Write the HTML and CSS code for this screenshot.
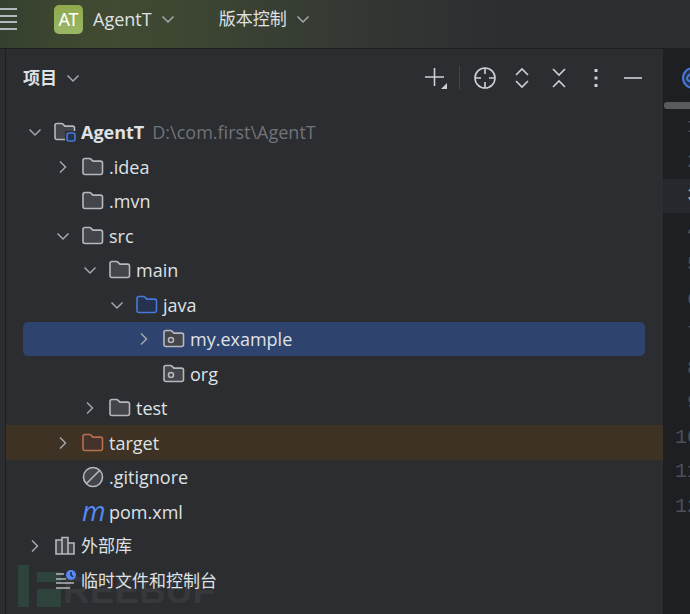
FILE: index.html
```html
<!DOCTYPE html>
<html lang="zh-CN">
  <head>
    <meta charset="utf-8">
    <meta name="viewport" content="width=device-width, initial-scale=1">
    <link rel="stylesheet" href="styles.css">
    <title>AgentT</title>
  </head>
  <body>
    <svg class="defs" width="0" height="0">
      <symbol id="down" viewBox="0 0 16 16"><path d="M2.500 5.500l5.500 5.500 5.500-5.500"/></symbol>
      <symbol id="right" viewBox="0 0 16 16"><path d="M5 2.500l5.500 5.500-5.500 5.500"/></symbol>
      <symbol id="folder" viewBox="0 0 22 22"><path d="M1 4.500q0-2 2-2h4.500q.8 0 1.400.6l2 2h7.600q2 0 2 2v9.400q0 2-2 2H3q-2 0-2-2z"/></symbol>
    </svg>
    <header class="titlebar">
      <button class="menu" aria-label="Menu"><svg width="17" height="26" viewBox="0 0 17 26"><path d="M0 3h17M0 10h17M0 16h17M0 23h17"/></svg></button>
      <button class="project"><span class="badge">AT</span><span>AgentT</span><svg class="arrow"><use href="#down"/></svg></button>
      <button class="vcs"><span>版本控制</span><svg class="arrow"><use href="#down"/></svg></button>
    </header>
    <div class="workspace">
      <div class="stripe"></div>
      <section class="panel">
        <div class="toolbar">
          <button class="view"><span>项目</span><svg class="arrow"><use href="#down"/></svg></button>
          <div class="tools">
            <button class="add" aria-label="New"><svg width="24" height="24" viewBox="0 0 24 24"><path d="M1 11h19M10.500 2v18"/><path class="solid" d="M23 17v6h-6z"/></svg></button>
            <button aria-label="Locate"><svg width="24" height="24" viewBox="0 0 24 24"><circle cx="12" cy="12" r="10"/><path d="M12 2v6M12 16v6M2 12h6M16 12h6"/></svg></button>
            <button aria-label="Expand all"><svg width="24" height="24" viewBox="0 0 24 24"><path d="M6 9l6-6 6 6M6 15l6 6 6-6"/></svg></button>
            <button aria-label="Collapse all"><svg width="24" height="24" viewBox="0 0 24 24"><path d="M6 3l6 6 6-6M6 21l6-6 6 6"/></svg></button>
            <button aria-label="Options"><svg width="24" height="24" viewBox="0 0 24 24"><path class="solid" d="M10.500 3h3v3h-3zM10.500 10.500h3v3h-3zM10.500 18h3v3h-3z"/></svg></button>
            <button aria-label="Hide"><svg width="24" height="24" viewBox="0 0 24 24"><path d="M3 12h18"/></svg></button>
          </div>
        </div>
        <div class="tree">
          <div class="row"><svg class="arrow"><use href="#down"/></svg><svg class="icon"><use href="#folder"/><rect class="knock" x="11" y="10" width="11" height="12"/><rect class="module" x="13" y="12" width="8" height="8" rx="2"/></svg><b>AgentT</b><span class="path">D:\com.first\AgentT</span></div>
          <div class="row l1"><svg class="arrow"><use href="#right"/></svg><svg class="icon"><use href="#folder"/></svg><span>.idea</span></div>
          <div class="row l1"><svg class="arrow"></svg><svg class="icon"><use href="#folder"/></svg><span>.mvn</span></div>
          <div class="row l1"><svg class="arrow"><use href="#down"/></svg><svg class="icon"><use href="#folder"/></svg><span>src</span></div>
          <div class="row l2"><svg class="arrow"><use href="#down"/></svg><svg class="icon"><use href="#folder"/></svg><span>main</span></div>
          <div class="row l3"><svg class="arrow"><use href="#down"/></svg><svg class="icon source"><use href="#folder"/></svg><span>java</span></div>
          <div class="row l4 selected"><svg class="arrow"><use href="#right"/></svg><svg class="icon"><use href="#folder"/><circle cx="8" cy="12" r="2.500"/></svg><span>my.example</span></div>
          <div class="row l4"><svg class="arrow"></svg><svg class="icon"><use href="#folder"/><circle cx="8" cy="12" r="2.500"/></svg><span>org</span></div>
          <div class="row l2"><svg class="arrow"><use href="#right"/></svg><svg class="icon"><use href="#folder"/></svg><span>test</span></div>
          <div class="row l1 excluded"><svg class="arrow"><use href="#right"/></svg><svg class="icon"><use href="#folder"/></svg><span>target</span></div>
          <div class="row l1"><svg class="arrow"></svg><svg class="icon"><circle cx="11" cy="11" r="9.500"/><path d="M4.500 17.500l13-13"/></svg><span>.gitignore</span></div>
          <div class="row l1"><svg class="arrow"></svg><i class="icon maven">m</i><span>pom.xml</span></div>
          <div class="row cjk"><svg class="arrow"><use href="#right"/></svg><svg class="icon"><path d="M2 5h6v14H2zM8 2.500h6V19H8zM14 8h6v11h-6z"/></svg><span>外部库</span></div>
          <div class="row cjk"><svg class="arrow"></svg><svg class="icon"><path d="M2 4h8M2 9h10M2 13h18M2 18h14"/><circle class="clock" cx="17" cy="5" r="5"/><path class="hand" d="M17 2v3l2 2"/></svg><span>临时文件和控制台</span></div>
        </div>
        <div class="watermark" aria-hidden="true"><svg width="43" height="42" viewBox="0 0 43 42"><path d="M0 0h11v42H0zM19 7h24v10H19zM19 24h24v18H19z"/></svg><span>REEBUF</span></div>
      </section>
      <aside class="editor">
        <div class="tab"><svg width="22" height="22" viewBox="0 0 22 22"><circle cx="11" cy="11" r="10"/><path d="M15 8q-4-4-8 0t0 6 8 0"/></svg></div>
        <div class="scroll"></div>
        <ol class="lines"><li>1</li><li>2</li><li class="current">3</li><li>4</li><li>5</li><li>6</li><li>7</li><li>8</li><li>9</li><li>10</li><li>11</li><li>12</li></ol>
      </aside>
    </div>
  </body>
</html>
```
FILE: styles.css
```css
* { box-sizing: border-box; }
body {
    margin: 0; min-height: 100vh; overflow: hidden;
    display: flex; flex-direction: column;
    background: #2b2d30; color: #dfe1e5;
    font: 18px/24px "Open Sans", "Noto Sans CJK SC", sans-serif;
}
button {
    display: flex; align-items: center; padding: 0;
    border: 0; background: none; color: inherit; font: inherit;
}
svg { display: block; flex: none; fill: none; stroke: #b4b8bf; stroke-width: 2; }
.defs { position: absolute; }
.arrow { width: 16px; height: 16px; stroke-width: 1.5; stroke: #a4a7ad; }
.solid { fill: #ced0d6; stroke: none; }

.titlebar {
    display: flex; align-items: center; height: 49px; padding-bottom: 10px;
    border-bottom: 1px solid #1e1f22;
    background: linear-gradient(90deg, #35402e 0, #414a31 100px, #3d4632 190px, #343933 340px, #2b2d30 520px);
}
.project { margin-left: 37px; }
.badge {
    width: 29px; height: 29px; margin-right: 10px; border-radius: 5px;
    background: linear-gradient(#90a94c, #99b765); color: #fff;
    font: 18px/29px "Noto Sans", sans-serif;
}
.project .arrow, .vcs .arrow, .view .arrow { margin-left: 8px; }
.vcs { margin-left: 43px; }
.vcs, .view, .cjk { font-size: 17px; }

.workspace { display: flex; flex: 1; }
.stripe { width: 6px; border-right: 1px solid #1e1f22; }
.panel { position: relative; flex: 1; min-width: 0; }
.toolbar {
    display: flex; justify-content: space-between; align-items: center;
    height: 58px; margin-bottom: 8px; padding: 0 18px 0 17px;
}
.view { font-weight: bold; }
.tools { display: flex; gap: 13px; }
.tools svg { stroke-width: 1.6; stroke: #ced0d6; }
.add { padding-right: 11px; border-right: 1px solid #43454a; }

.tree { position: relative; z-index: 1; }
.row {
    display: flex; align-items: center; height: 34px; padding-left: 21px;
    white-space: nowrap;
}
.row:nth-child(even) { height: 35px; }
.row .icon { width: 22px; height: 22px; margin: 0 5px 0 11px; stroke-width: 1.6; fill: #43454a; }
.l1 { padding-left: 49px; }
.l2 { padding-left: 76px; }
.l3 { padding-left: 103px; }
.l4 { margin: 0 18px 0 17px; padding-left: 113px; border-radius: 5px; }
.path { margin-left: 8px; color: #6f737a; }
.selected { background: #2e436e; }
.excluded { background: #3d3223; }
.excluded .icon { stroke: #b86f50; fill: #45322b; }
.row .source { stroke: #4879d8; fill: #25324d; }
.knock { fill: #2b2d30; stroke: none; }
.module { fill: #25324d; stroke: #4879d8; }
.row .maven { color: #548af7; font-size: 27px; line-height: 20px; }
.clock { fill: #548af7; stroke: none; }
.hand { stroke: #25324d; }

.watermark {
    position: absolute; left: 12px; bottom: 7px; display: flex; align-items: flex-end; gap: 2px;
    color: #36383b; font: bold 37px/32px "Liberation Sans", sans-serif;
}
.watermark path { fill: #2d433c; stroke: none; }

.editor { width: 27px; overflow: hidden; background: #1e1f22; }
.tab { height: 53px; padding: 18px 0 0 19px; }
.tab svg { stroke: #4879d8; fill: #25324d; }
.scroll { height: 7px; margin: 0 0 1px 1px; border-radius: 3px 0 0 3px; background: #5a5b5e; }
.lines {
    width: 36px; margin: 0; padding: 0; list-style: none; text-align: right;
    color: #4b5059; font: 20px/34px "Liberation Mono", monospace;
}
.lines li:nth-child(even) { line-height: 35px; }
.lines .current { background: #26282e; color: #a1a3ab; }
```
